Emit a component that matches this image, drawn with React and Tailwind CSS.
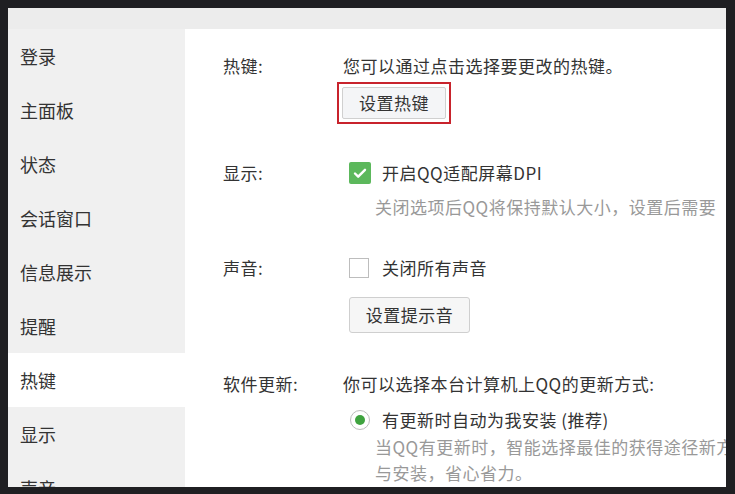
const navItems = ['登录', '主面板', '状态', '会话窗口', '信息展示', '提醒', '热键', '显示', '声音']

function CheckBox({ checked }) {
    if (checked) {
        return (
            <span className="flex h-[22px] w-[22px] items-center justify-center rounded-[2px] bg-[#5cb85c]">
                <svg width="16" height="16" viewBox="0 0 16 16">
                    <path d="M3 8.5l3.2 3.2L13 4.8" fill="none" stroke="#fff" strokeWidth="2.4" strokeLinecap="round" strokeLinejoin="round" />
                </svg>
            </span>
        )
    }
    return <span className="block h-[20px] w-[20px] border border-[#bdbdbd] bg-white" />
}

export default function App() {
    return (
        <div className="relative h-[494px] w-[735px] overflow-hidden bg-[#1f1f22] pl-[8px] pt-[8px] font-['Noto_Sans_CJK_SC','Noto_Sans',sans-serif] text-[#333]">
            <div className="flex h-[479px] w-[718px] flex-col overflow-hidden bg-white">
                <div className="h-[21px] shrink-0 bg-[#ececec]" />
                <div className="flex min-h-0 flex-1 overflow-hidden">
                    <nav className="w-[177px] shrink-0 bg-[#f0f0f0]">
                        {navItems.map((item) => (
                            <div
                                key={item}
                                className={`flex h-[54px] items-center pl-[12px] text-[18px] ${item === '热键' ? 'bg-white' : ''}`}
                            >
                                {item}
                            </div>
                        ))}
                    </nav>
                    <main className="min-w-0 flex-1 overflow-hidden pl-[38px] pt-[25px] text-[17px] leading-[24px] tracking-[0.5px]">
                        <section className="flex">
                            <div className="w-[120px] shrink-0">热键:</div>
                            <div>
                                <div>您可以通过点击选择要更改的热键。</div>
                                <div className="-ml-[6px] mt-[4px] inline-block border-2 border-[#c8232c] p-[3px]">
                                    <button className="h-[32px] w-[104px] rounded-[2px] border border-[#d0d0d0] bg-[#f4f5f7] text-[17px] tracking-[0.5px]">
                                        设置热键
                                    </button>
                                </div>
                            </div>
                        </section>

                        <section className="mt-[37px] flex">
                            <div className="w-[126px] shrink-0">显示:</div>
                            <div>
                                <div className="flex items-center gap-[11px]">
                                    <CheckBox checked />
                                    <span>开启QQ适配屏幕DPI</span>
                                </div>
                                <div className="mt-[10px] whitespace-nowrap pl-[26px] text-[#999]">
                                    关闭选项后QQ将保持默认大小，设置后需要
                                </div>
                            </div>
                        </section>

                        <section className="mt-[37px] flex">
                            <div className="w-[126px] shrink-0">声音:</div>
                            <div>
                                <div className="flex items-center gap-[13px]">
                                    <CheckBox />
                                    <span>关闭所有声音</span>
                                </div>
                                <button className="mt-[17px] h-[36px] w-[121px] rounded-[3px] border border-[#cfcfcf] bg-[#f6f6f6] text-[17px] tracking-[0.5px]">
                                    设置提示音
                                </button>
                            </div>
                        </section>

                        <section className="mt-[39px] flex">
                            <div className="w-[120px] shrink-0">软件更新:</div>
                            <div>
                                <div className="whitespace-nowrap">你可以选择本台计算机上QQ的更新方式:</div>
                                <div className="ml-[7px] mt-[12px] flex items-center gap-[12px]">
                                    <span className="flex h-[20px] w-[20px] items-center justify-center rounded-full border border-[#bdbdbd] bg-white">
                                        <span className="h-[10px] w-[10px] rounded-full bg-[#3fa33f]" />
                                    </span>
                                    <span>有更新时自动为我安装 (推荐)</span>
                                </div>
                                <div className="mt-[2px] whitespace-nowrap pl-[32px] leading-[26px] text-[#999]">
                                    <div>当QQ有更新时，智能选择最佳的获得途径新方</div>
                                    <div>与安装，省心省力。</div>
                                </div>
                            </div>
                        </section>
                    </main>
                </div>
            </div>
        </div>
    )
}
